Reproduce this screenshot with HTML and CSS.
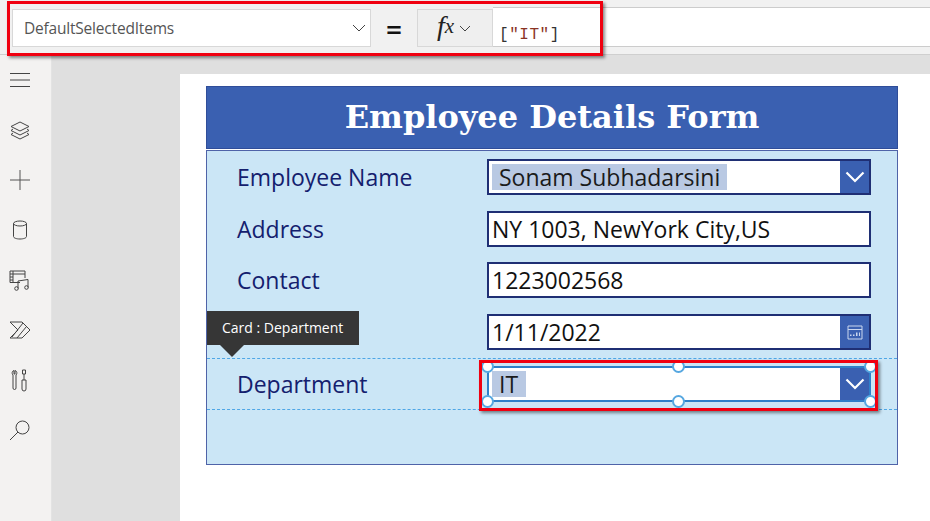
FILE: index.html
```html
<!DOCTYPE html>
<html lang="en">
<head>
<meta charset="utf-8">
<title>Employee Details Form</title>
<link rel="stylesheet" href="styles.css">
</head>
<body>
<div class="app">
  <header class="topbar">
    <div class="prop-select">
      <span class="prop-name">DefaultSelectedItems</span>
      <svg class="prop-chev" width="14" height="8" viewBox="0 0 14 8"><path d="M1 1l6 6 6-6" fill="none" stroke="#444" stroke-width="1"/></svg>
    </div>
    <div class="equals">=</div>
    <div class="fx-btn">
      <span class="fx">f<span class="fx-x">x</span></span>
      <svg width="12" height="7" viewBox="0 0 12 7"><path d="M1 1l5 5 5-5" fill="none" stroke="#444" stroke-width="1"/></svg>
    </div>
    <div class="formula"><span class="code">[<span class="str">"IT"</span>]</span></div>
    <div class="red-bar"></div>
  </header>
  <div class="main">
    <nav class="rail">
      <svg class="ico" width="24" height="24" viewBox="0 0 24 24"><path d="M2 5.500h20M2 12h20M2 18.500h20" stroke="#444" fill="none"/></svg>
      <svg class="ico" width="24" height="24" viewBox="0 0 24 24"><path d="M12 4l9 4.500-9 4.500-9-4.500zM5 11l-2 1.500 9 4.500 9-4.500-2-1.500M5 15l-2 1.500 9 4.500 9-4.500-2-1.500" stroke="#444" fill="none"/></svg>
      <svg class="ico" width="24" height="24" viewBox="0 0 24 24"><path d="M12 2v20M2 12h20" stroke="#555" fill="none"/></svg>
      <svg class="ico" width="24" height="24" viewBox="0 0 24 24"><ellipse cx="12" cy="5.500" rx="6.500" ry="2.500" stroke="#444" fill="none"/><path d="M5.500 5.500v13c0 1.500 3 2.500 6.500 2.500s6.500-1 6.500-2.500v-13" stroke="#444" fill="none"/></svg>
      <svg class="ico" width="24" height="24" viewBox="0 0 24 24"><path d="M12 14.500H2V3h15v7M2 6h15M5 3v11.500M2 9h3M2 12h3" stroke="#444" fill="none"/><path d="M10 20.500V13l10-1.500v8" stroke="#444" fill="none"/><circle cx="8.500" cy="20.500" r="1.800" stroke="#444" fill="none"/><circle cx="18.500" cy="19.500" r="1.800" stroke="#444" fill="none"/></svg>
      <svg class="ico" width="24" height="24" viewBox="0 0 24 24"><path d="M2 4h12l8 8-8 8H2l8-8z" stroke="#444" fill="none"/><path d="M15 5L4 19M18.500 8.500L9 20" stroke="#444" fill="none"/></svg>
      <svg class="ico" width="24" height="24" viewBox="0 0 24 24"><path d="M6 2.500c-2 .5-2.500 3-1 4.500v13a1.500 1.500 0 003 0V7c1.500-1.500 1-4-1-4.500v3.500H6zM14.500 2h3v4h-3zM16 6v6M14 12h4v9a2 2 0 01-4 0z" stroke="#444" fill="none"/></svg>
      <svg class="ico" width="24" height="24" viewBox="0 0 24 24"><circle cx="14.500" cy="9.500" r="6.500" stroke="#444" fill="none"/><path d="M10 14L2 22" stroke="#444" fill="none"/></svg>
    </nav>
    <main class="canvas">
      <section class="screen">
        <h1 class="form-title">Employee Details Form</h1>
        <form class="form">
          <div class="row">
            <label class="label">Employee Name</label>
            <div class="field">
              <span class="tag wide">Sonam Subhadarsini</span>
              <span class="cap"><svg width="20" height="12" viewBox="0 0 20 12"><path d="M1.500 1.500l8.500 8.500 8.500-8.500" fill="none" stroke="#fff" stroke-width="2.200"/></svg></span>
            </div>
          </div>
          <div class="row">
            <label class="label">Address</label>
            <div class="field"><span class="value">NY 1003, NewYork City,US</span></div>
          </div>
          <div class="row row-third">
            <label class="label">Contact</label>
            <div class="field"><span class="value">1223002568</span></div>
          </div>
          <div class="row">
            <label class="label"></label>
            <div class="field">
              <span class="value">1/11/2022</span>
              <span class="cap"><svg width="16" height="15" viewBox="0 0 16 15"><path d="M1 1h14v13H1zM1 4.500h14" fill="none" stroke="#c9d6ee"/><path d="M6 11h1.500V9.500H6zM9 11h1.500V7.500H9zM12 11h1V7.500h-1zM3 11h1.500V9.500H3z" fill="#c9d6ee"/></svg></span>
            </div>
          </div>
          <div class="row row-selected">
            <label class="label">Department</label>
            <div class="field field-selected">
              <span class="tag">IT</span>
              <span class="cap"><svg width="20" height="12" viewBox="0 0 20 12"><path d="M1.500 1.500l8.500 8.500 8.500-8.500" fill="none" stroke="#fff" stroke-width="2.200"/></svg></span>
              <i class="handle h-tl"></i><i class="handle h-tc"></i><i class="handle h-tr"></i>
              <i class="handle h-bl"></i><i class="handle h-bc"></i><i class="handle h-br"></i>
              <div class="red-field"></div>
            </div>
            <div class="tip">Card : Department</div>
          </div>
        </form>
      </section>
    </main>
  </div>
</div>
</body>
</html>
```
FILE: styles.css
```css
* { box-sizing: border-box; }
html, body { margin: 0; height: 100%; overflow: hidden; }
body { font-family: "Open Sans", "Noto Sans", sans-serif; background: #dfdfdf; }
.app { width: 930px; height: 521px; display: flex; flex-direction: column; }

.topbar { position: relative; height: 55px; flex: none; background: #f1f1f1; border-bottom: 1px solid #cfcfcf; display: flex; align-items: flex-start; padding: 9px 0 0 12px; }
.prop-select { width: 359px; height: 38px; background: #fff; border: 1px solid #d8d8d8; display: flex; align-items: center; justify-content: space-between; padding: 0 4px 0 11px; }
.prop-name { font-size: 15.500px; color: #555; letter-spacing: -.2px; }
.equals { width: 46px; height: 38px; line-height: 40px; text-align: center; font-size: 28px; font-weight: 600; color: #111; }
.fx-btn { width: 76px; height: 38px; background: #efefef; border: 1px solid #d8d8d8; display: flex; align-items: center; justify-content: center; gap: 5px; padding-right: 2px; }
.fx { font-family: "Liberation Serif", serif; font-style: italic; font-size: 28px; line-height: 30px; color: #222; position: relative; top: -1px; }
.fx-x { font-size: 21px; position: relative; top: -2px; }
.formula { flex: 1; height: 40px; margin-top: -2px; background: #fff; border-top: 1px solid #ccc; border-bottom: 1px solid #ccc; padding: 14px 0 0 6px; }
.code { font-family: "Liberation Mono", monospace; font-size: 16px; line-height: 20px; color: #333; letter-spacing: .55px; }
.str { color: #8a3324; }
.red-bar { position: absolute; left: 7px; top: 1px; width: 596px; height: 55px; border: 3px solid #f00010; box-shadow: 2px 2px 3px rgba(0,0,0,.45); pointer-events: none; }

.main { flex: 1; display: flex; min-height: 0; }
.rail { width: 52px; flex: none; background: #f3f2f1; display: flex; flex-direction: column; align-items: center; padding: 13px 12px 0 0; gap: 26px; border-right: 1px solid #e3e3e3; }
.ico { display: block; flex: none; }

.canvas { flex: 1; padding: 19px 0 0 128px; background: #dfdfdf; }
.screen { height: 100%; background: #fff; padding: 12px 32px 0 26px; }
.form-title { margin: 0 0 1px; height: 63px; background: #3a60b1; border: 1px solid #2f4d99; color: #fff; font-family: "DejaVu Serif", serif; font-weight: 700; font-size: 32px; line-height: 60px; text-align: center; white-space: nowrap; }
.form { position: relative; height: 315px; background: #cbe6f6; border: 1px solid #4f63a8; }

.row { position: relative; height: 52px; display: flex; align-items: center; padding-left: 30px; }
.row-third { margin-top: -1px; }
.label { width: 250px; font-size: 23px; color: #14206e; }
.field { position: relative; width: 384px; height: 36px; background: #fff; border: 2px solid #1f2f74; display: flex; align-items: center; }
.value { font-size: 23px; color: #111; padding-left: 3px; white-space: nowrap; }
.tag { background: #b9c9e3; height: 26px; line-height: 26px; padding: 0 8px 0 7px; margin-left: 3px; font-size: 23px; color: #1b1b1b; white-space: nowrap; }
.tag.wide { width: 235px; }
.cap { position: absolute; right: 0; top: 0; bottom: 0; width: 29px; background: #3a60b1; display: flex; align-items: center; justify-content: center; }

.row-selected { border-top: 1px dashed #4ea6e6; border-bottom: 1px dashed #4ea6e6; }
.field-selected { border-color: #2f80c9; }
.handle { position: absolute; width: 13px; height: 13px; border-radius: 50%; background: #fff; border: 2px solid #56a7e0; }
.h-tl { left: -8px; top: -8px; }
.h-tc { left: 183px; top: -8px; }
.h-tr { right: -8px; top: -8px; }
.h-bl { left: -8px; bottom: -8px; }
.h-bc { left: 183px; bottom: -8px; }
.h-br { right: -8px; bottom: -8px; }
.red-field { position: absolute; left: -10px; top: -8px; right: -9px; bottom: -11px; border: 3px solid #f00010; box-shadow: 2px 2px 3px rgba(0,0,0,.45); pointer-events: none; }

.tip { position: absolute; left: 0; top: -48px; width: 152px; height: 34px; background: #363636; color: #fff; font-size: 14px; line-height: 34px; padding-left: 15px; }
.tip::after { content: ""; position: absolute; left: 13px; top: 34px; border: 12px solid transparent; border-top-color: #363636; border-bottom: 0; }
```
